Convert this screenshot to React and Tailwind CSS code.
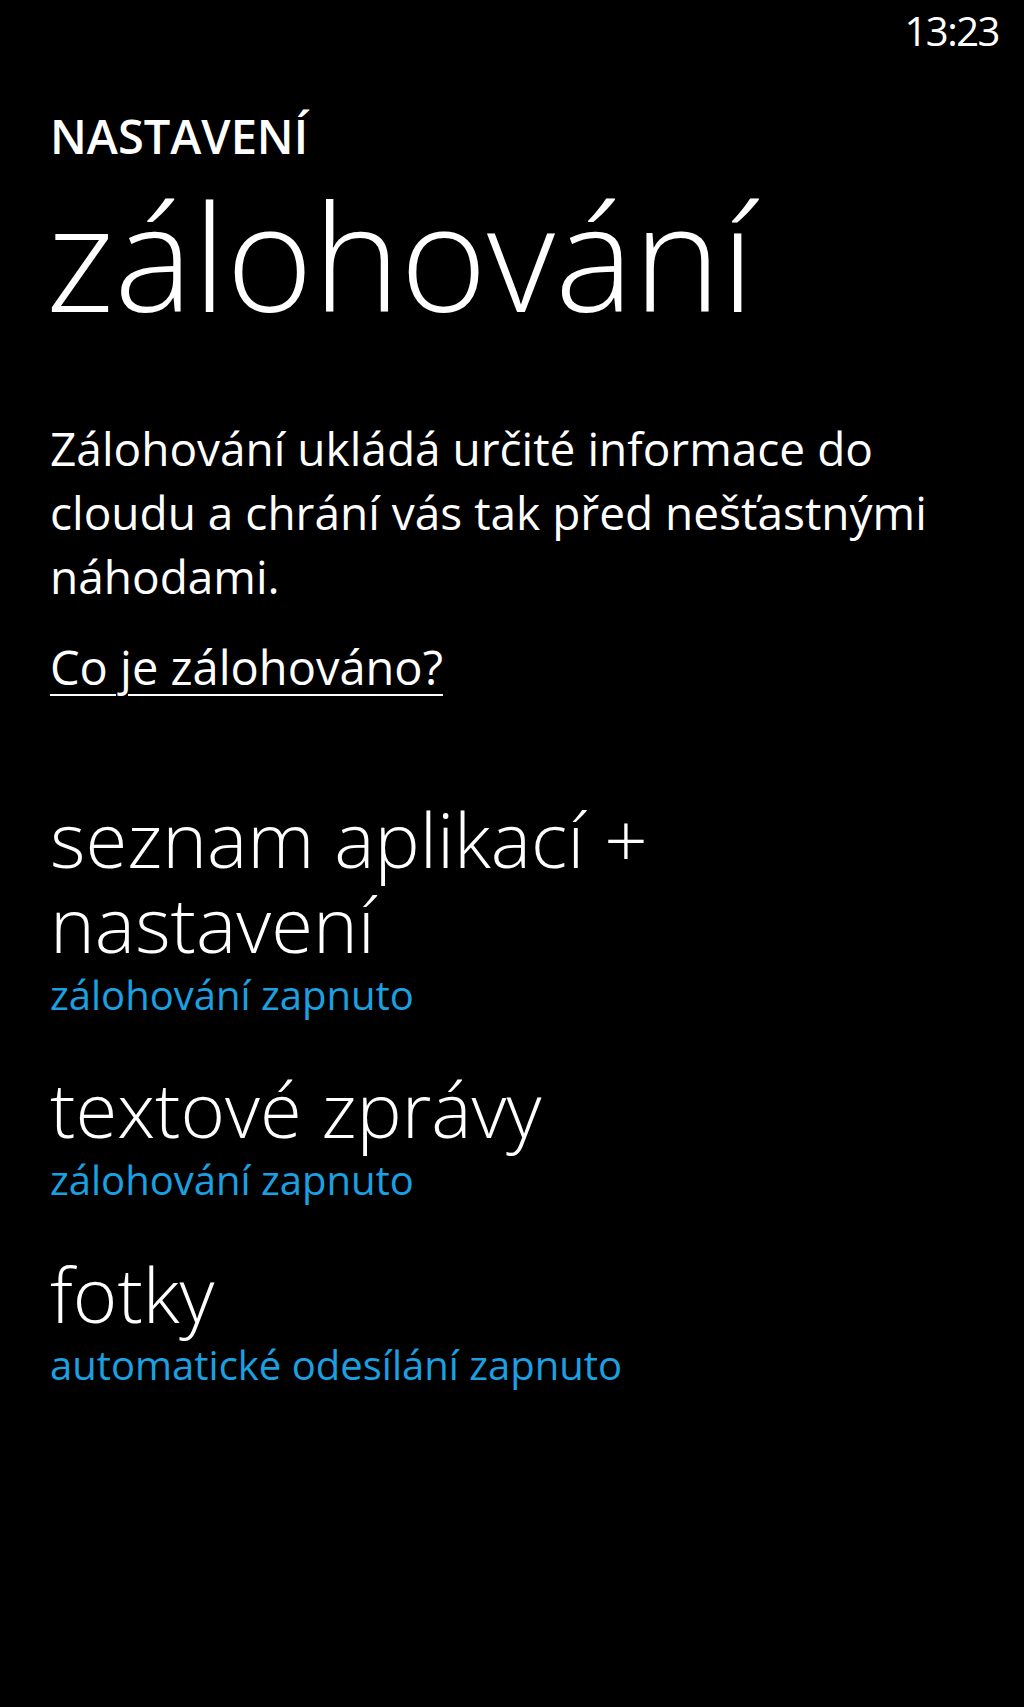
import React from "react";

const font = { fontFamily: '"Open Sans", "Noto Sans", "DejaVu Sans", sans-serif' };

function Item({ title, sub }) {
  return (
    <div className="flex flex-col">
      <div className="text-[76px] leading-[85px] font-light text-white">{title}</div>
      <div className="pt-[4px] text-[40px] leading-[50px] text-[#1ba1e2]">{sub}</div>
    </div>
  );
}

export default function App() {
  return (
    <div className="min-h-[1707px] w-full bg-black text-white" style={font}>
      <div className="flex justify-end pr-[25px] pt-[6px]">
        <span className="text-[40px] leading-[50px] tracking-[-1.5px]">13:23</span>
      </div>
      <div className="pl-[50px] pr-[30px]">
        <div className="mt-[54px] text-[47px] leading-[52px] font-semibold">NASTAVENÍ</div>
        <div className="mt-[13px] text-[148px] leading-[160px] font-light -ml-[4px]">zálohování</div>
        <p className="mt-[81px] text-[46px] leading-[64px]">
          Zálohování ukládá určité informace do
          <br />
          cloudu a chrání vás tak před nešťastnými
          <br />
          náhodami.
        </p>
        <div className="mt-[34px] text-[47px] leading-[50px]">
          <span className="underline decoration-2 underline-offset-[9px]">Co je zálohováno?</span>
        </div>
        <div className="mt-[104px] flex flex-col gap-[46px]">
          <Item
            title={
              <>
                seznam aplikací +
                <br />
                nastavení
              </>
            }
            sub="zálohování zapnuto"
          />
          <Item title="textové zprávy" sub="zálohování zapnuto" />
          <Item title="fotky" sub="automatické odesílání zapnuto" />
        </div>
      </div>
    </div>
  );
}
